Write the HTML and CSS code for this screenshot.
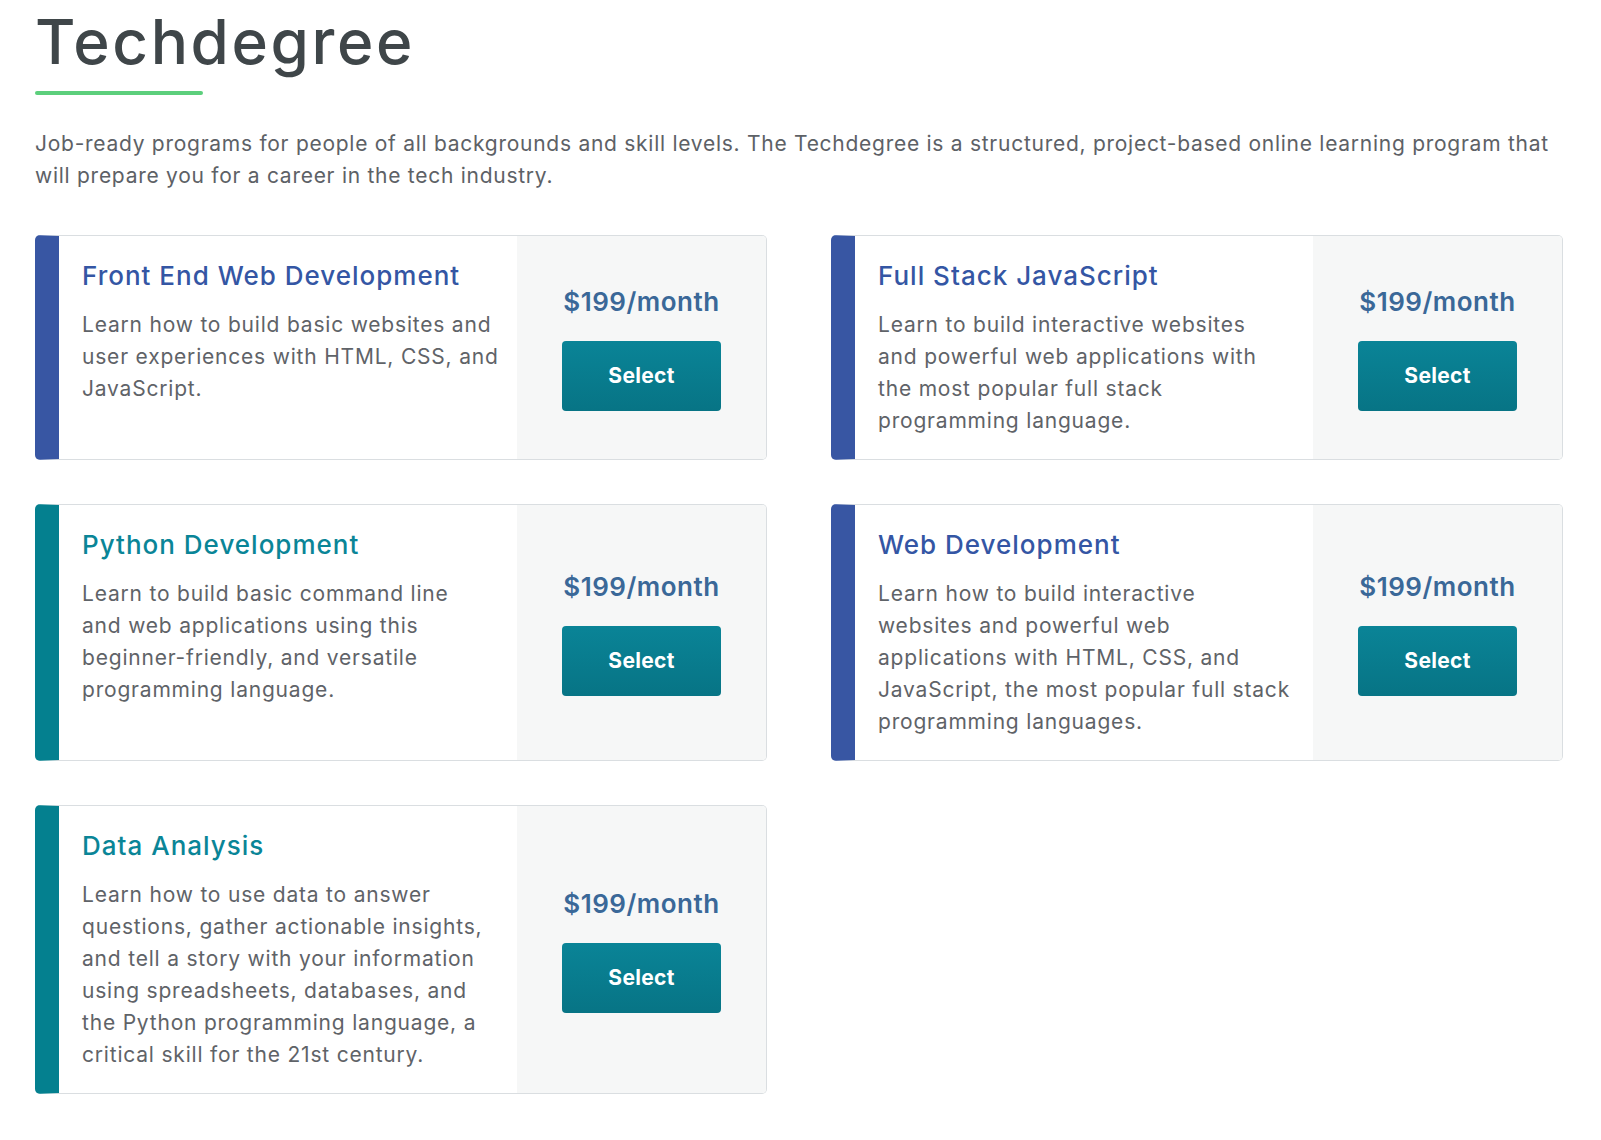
FILE: index.html
```html
<!DOCTYPE html>
<html lang="en">
<head>
<meta charset="utf-8">
<title>Techdegree</title>
<link rel="stylesheet" href="styles.css">
</head>
<body>
<main class="page">
  <header class="intro">
    <h1 class="intro-title">Techdegree</h1>
    <div class="intro-rule"></div>
    <p class="intro-text">Job-ready programs for people of all backgrounds and skill levels. The Techdegree is a structured, project-based online learning program that will prepare you for a career in the tech industry.</p>
  </header>

  <section class="tracks">
    <article class="track track-blue">
      <div class="track-info">
        <h2 class="track-title">Front End Web Development</h2>
        <p class="track-desc">Learn how to build basic websites and<br> user experiences with HTML, CSS, and<br> JavaScript.</p>
      </div>
      <div class="track-buy">
        <div class="track-price">$199/month</div>
        <button class="track-btn">Select</button>
      </div>
    </article>

    <article class="track track-blue">
      <div class="track-info">
        <h2 class="track-title">Full Stack JavaScript</h2>
        <p class="track-desc">Learn to build interactive websites<br> and powerful web applications with<br> the most popular full stack<br> programming language.</p>
      </div>
      <div class="track-buy">
        <div class="track-price">$199/month</div>
        <button class="track-btn">Select</button>
      </div>
    </article>

    <article class="track track-teal">
      <div class="track-info">
        <h2 class="track-title">Python Development</h2>
        <p class="track-desc">Learn to build basic command line<br> and web applications using this<br> beginner-friendly, and versatile<br> programming language.</p>
      </div>
      <div class="track-buy">
        <div class="track-price">$199/month</div>
        <button class="track-btn">Select</button>
      </div>
    </article>

    <article class="track track-blue">
      <div class="track-info">
        <h2 class="track-title">Web Development</h2>
        <p class="track-desc">Learn how to build interactive<br> websites and powerful web<br> applications with HTML, CSS, and<br> JavaScript, the most popular full stack<br> programming languages.</p>
      </div>
      <div class="track-buy">
        <div class="track-price">$199/month</div>
        <button class="track-btn">Select</button>
      </div>
    </article>

    <article class="track track-teal">
      <div class="track-info">
        <h2 class="track-title">Data Analysis</h2>
        <p class="track-desc">Learn how to use data to answer<br> questions, gather actionable insights,<br> and tell a story with your information<br> using spreadsheets, databases, and<br> the Python programming language, a<br> critical skill for the 21st century.</p>
      </div>
      <div class="track-buy">
        <div class="track-price">$199/month</div>
        <button class="track-btn">Select</button>
      </div>
    </article>
  </section>
</main>
</body>
</html>
```

FILE: styles.css
```css
* { box-sizing: border-box; }

html, body {
  margin: 0;
  padding: 0;
  background: #ffffff;
}

body {
  font-family: Inter, "Open Sans", "Liberation Sans", sans-serif;
  color: #5d6166;
}

.page {
  width: 1601px;
  padding: 5px 38px 40px 35px;
}

.intro-title {
  margin: 0;
  font-size: 62px;
  line-height: 74px;
  font-weight: 500;
  color: #3f4649;
  letter-spacing: 2.6px;
}

.intro-rule {
  width: 168px;
  height: 4px;
  margin-top: 12px;
  background: #5ccf7c;
  border-radius: 2px;
}

.intro-text {
  margin: 33px 0 0;
  font-size: 21px;
  line-height: 32px;
  letter-spacing: 0.73px;
  color: #5d6166;
}

.tracks {
  display: grid;
  grid-template-columns: 732px 732px;
  column-gap: 64px;
  row-gap: 44px;
  margin-top: 43px;
}

.track {
  display: flex;
  border: 1px solid #dadee1;
  border-left-width: 24px;
  border-radius: 5px;
  background: #ffffff;
  overflow: hidden;
}

.track-blue { border-left-color: #3856a3; }
.track-teal { border-left-color: #04808f; }

.track-info {
  flex: 1;
  min-width: 0;
  padding: 24px 8px 22px 23px;
}

.track-title {
  margin: 0 0 17px;
  font-size: 26px;
  line-height: 32px;
  font-weight: 500;
  letter-spacing: 1px;
}

.track-blue .track-title { color: #3456a4; }
.track-teal .track-title { color: #0a8597; }

.track-desc {
  margin: 0;
  font-size: 21px;
  line-height: 32px;
  letter-spacing: 0.8px;
  color: #5f6368;
  white-space: nowrap;
}

.track-buy {
  width: 249px;
  flex: none;
  background: #f6f7f7;
  display: flex;
  flex-direction: column;
  align-items: center;
  justify-content: center;
  padding-top: 1px;
}

.track-price {
  font-size: 26px;
  line-height: 32px;
  font-weight: 600;
  letter-spacing: 0.5px;
  color: #3a6898;
  margin-bottom: 23px;
}

.track-btn {
  width: 159px;
  height: 70px;
  border: 0;
  border-radius: 4px;
  background: linear-gradient(#0a8497, #077485);
  color: #ffffff;
  font-family: inherit;
  font-size: 21px;
  font-weight: 700;
  letter-spacing: 0.3px;
  cursor: pointer;
}
```
